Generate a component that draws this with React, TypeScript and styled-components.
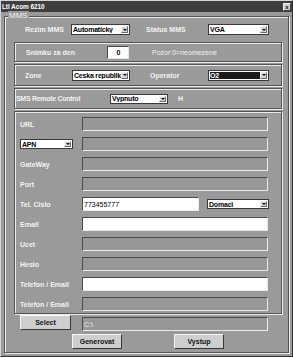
import React from 'react';
import styled, { createGlobalStyle } from 'styled-components';

const BG = '#9a9a9a';
const DARK = '#545454';
const LIGHT = '#ececec';
const LABEL = '#f3f3f3';

const Global = createGlobalStyle`
  html, body { margin: 0; padding: 0; background: ${BG}; }
  body { font-family: "Liberation Sans", Arial, sans-serif; }
  * { box-sizing: border-box; }
`;

const Window = styled.div`
  width: 293px;
  height: 357px;
  background: ${BG};
  border: 1px solid;
  border-color: #d6d6d6 #303030 #303030 #d6d6d6;
  display: flex;
  flex-direction: column;
`;

const TitleBar = styled.div`
  flex: none;
  height: 11px;
  background: #3e3e3e;
  display: flex;
  align-items: center;
  justify-content: space-between;
  padding: 0 1px 0 1px;
`;

const Title = styled.span`
  font-size: 6.5px;
  font-weight: bold;
  letter-spacing: -0.1px;
  color: #ffffff;
  white-space: nowrap;
`;

const CloseBtn = styled.span`
  width: 8px;
  height: 8px;
  background: #cfcfcf;
  border: 1px solid;
  border-color: #f0f0f0 #404040 #404040 #f0f0f0;
  display: flex;
  align-items: center;
  justify-content: center;
  font-size: 6px;
  font-weight: bold;
  line-height: 1;
  color: #111;
`;

const Body = styled.div`
  flex: 1;
  padding: 4px 3px 3px 3px;
  display: flex;
`;

const GroupBox = styled.div`
  position: relative;
  flex: 1;
  border: 1px solid ${DARK};
  box-shadow: inset 1px 1px 0 ${LIGHT}, 1px 1px 0 ${LIGHT};
  padding: 0 6px 0 9px;
  display: flex;
  flex-direction: column;
`;

const Legend = styled.span`
  position: absolute;
  top: -6px;
  left: 3px;
  padding: 0 1px;
  background: ${BG};
  font-size: 8px;
  line-height: 10px;
  color: ${LABEL};
`;

const Row = styled.div<{ $mt?: number; $h?: number }>`
  flex: none;
  display: flex;
  align-items: center;
  margin-top: ${p => p.$mt ?? 0}px;
  height: ${p => (p.$h ? `${p.$h}px` : 'auto')};
`;

const Box = styled.div<{ $mt: number; $h?: number }>`
  flex: none;
  margin-top: ${p => p.$mt}px;
  height: ${p => (p.$h ? `${p.$h}px` : 'auto')};
  border: 1px solid ${DARK};
  box-shadow: inset 1px 1px 0 ${LIGHT}, 1px 1px 0 ${LIGHT};
  display: flex;
  align-items: center;
`;

const FormBox = styled(Box)`
  flex-direction: column;
  align-items: stretch;
  gap: 6px;
  padding: 5px 0 2px 0;
`;

const FormRow = styled.div`
  height: 14px;
  display: flex;
  align-items: center;
`;

const Label = styled.span<{ $w?: number; $pl?: number; $ml?: number; $tight?: boolean; $thin?: boolean }>`
  flex: none;
  width: ${p => (p.$w ? `${p.$w}px` : 'auto')};
  padding-left: ${p => p.$pl ?? 0}px;
  margin-left: ${p => p.$ml ?? 0}px;
  font-size: 7px;
  font-weight: ${p => (p.$thin ? 'normal' : 'bold')};
  letter-spacing: ${p => (p.$tight ? '-0.3px' : '0')};
  color: ${LABEL};
  white-space: nowrap;
`;

const SelectBox = styled.div<{ $w: number; $h: number; $ml?: number; $mr?: number }>`
  flex: none;
  width: ${p => p.$w}px;
  height: ${p => p.$h}px;
  margin-left: ${p => p.$ml ?? 0}px;
  margin-right: ${p => p.$mr ?? 0}px;
  background: #ffffff;
  border: 1px solid #3a3a3a;
  display: flex;
  padding: 1px;
`;

const SelectText = styled.span<{ $dark?: boolean }>`
  flex: 1;
  min-width: 0;
  overflow: hidden;
  white-space: nowrap;
  padding-left: 0;
  background: ${p => (p.$dark ? '#1b1b1b' : '#ffffff')};
  color: ${p => (p.$dark ? '#ffffff' : '#000000')};
  font-size: 7px;
  font-weight: bold;
  letter-spacing: -0.2px;
  display: flex;
  align-items: center;
`;

const DropBtn = styled.span`
  flex: none;
  width: 7px;
  background: #d3d3d3;
  border: 1px solid;
  border-color: #f2f2f2 #6a6a6a #6a6a6a #f2f2f2;
  display: flex;
  align-items: center;
  justify-content: center;
  &::after {
    content: '';
    border-left: 2px solid transparent;
    border-right: 2px solid transparent;
    border-top: 2px solid #111;
  }
`;

const Field = styled.div<{ $w: number; $h?: number; $white?: boolean; $ml?: number; $mt?: number; $center?: boolean; $bold?: boolean }>`
  flex: none;
  width: ${p => p.$w}px;
  height: ${p => p.$h ?? 14}px;
  margin-left: ${p => p.$ml ?? 0}px;
  margin-top: ${p => p.$mt ?? 0}px;
  background: ${p => (p.$white ? '#ffffff' : '#979797')};
  border: 1px solid;
  border-color: #4a4a4a #e9e9e9 #e9e9e9 #4a4a4a;
  padding-left: 1px;
  display: flex;
  align-items: center;
  justify-content: ${p => (p.$center ? 'center' : 'flex-start')};
  font-size: 7px;
  font-weight: ${p => (p.$bold ? 'bold' : 'normal')};
  color: ${p => (p.$white ? '#000000' : '#f4f4f4')};
  white-space: nowrap;
`;

const Button = styled.button<{ $w: number }>`
  flex: none;
  width: ${p => p.$w}px;
  height: 15px;
  padding: 0;
  background: #cecece;
  border: 1px solid;
  border-color: #f6f6f6 #383838 #383838 #f6f6f6;
  font-family: "Liberation Sans", Arial, sans-serif;
  font-size: 7px;
  font-weight: bold;
  color: #111111;
`;

const ActionRow = styled.div`
  flex: none;
  display: flex;
  align-items: flex-start;
  margin-top: 1px;
  padding-left: 6px;
`;

const ButtonRow = styled.div`
  flex: none;
  display: flex;
  margin-top: 3px;
  padding-left: 58px;
  gap: 52px;
`;

const Select: React.FC<{ w: number; h: number; text: string; dark?: boolean; ml?: number; mr?: number }> = ({ w, h, text, dark, ml, mr }) => (
  <SelectBox $w={w} $h={h} $ml={ml} $mr={mr}>
    <SelectText $dark={dark}>{text}</SelectText>
    <DropBtn />
  </SelectBox>
);

const formRows: { label?: string; white?: boolean }[] = [
  { label: 'URL' },
  {},
  { label: 'GateWay' },
  { label: 'Port' },
  { label: 'Tel. Cislo' },
  { label: 'Email', white: true },
  { label: 'Ucet' },
  { label: 'Heslo' },
  { label: 'Telefon / Email', white: true },
  { label: 'Telefon / Email' },
];

export default function App() {
  return (
    <>
      <Global />
      <Window>
        <TitleBar>
          <Title>Ltl Acom 6210</Title>
          <CloseBtn>x</CloseBtn>
        </TitleBar>
        <Body>
          <GroupBox>
            <Legend>MMS</Legend>
            <Row $mt={7} $h={11}>
              <Label $w={57} $pl={11}>Rezim MMS</Label>
              <Select w={59} h={11} text="Automaticky" />
              <Label $w={78} $pl={16}>Status MMS</Label>
              <Select w={61} h={11} text="VGA" />
            </Row>
            <Box $mt={7} $h={20}>
              <Label $w={92} $pl={11}>Snimku za den</Label>
              <Field $w={22} $h={13} $white $center $bold>0</Field>
              <Label $ml={23} $thin>Pozor:0=neomezene</Label>
            </Box>
            <Box $mt={2} $h={22}>
              <Label $w={57} $pl={10}>Zone</Label>
              <Select w={58} h={11} text="Ceska republik" />
              <Label $w={78} $pl={20}>Operator</Label>
              <Select w={61} h={11} text="O2" dark />
            </Box>
            <Box $mt={2} $h={21}>
              <Label $w={95} $pl={1} $tight>SMS Remote Control</Label>
              <Select w={58} h={10} text="Vypnuto" />
              <Label $ml={10}>H</Label>
            </Box>
            <FormBox $mt={2}>
              {formRows.map((r, i) => {
                if (i === 1) {
                  return (
                    <FormRow key={i}>
                      <Select w={53} h={10} text="APN" ml={5} mr={9} />
                      <Field $w={186} />
                    </FormRow>
                  );
                }
                if (r.label === 'Tel. Cislo') {
                  return (
                    <FormRow key={i}>
                      <Label $w={67} $pl={5}>{r.label}</Label>
                      <Field $w={117} $white>773455777</Field>
                      <Select w={62} h={10} text="Domaci" ml={8} />
                    </FormRow>
                  );
                }
                return (
                  <FormRow key={i}>
                    <Label $w={67} $pl={5}>{r.label}</Label>
                    <Field $w={186} $white={r.white} />
                  </FormRow>
                );
              })}
            </FormBox>
            <ActionRow>
              <Button $w={51}>Select</Button>
              <Field $w={186} $ml={11} $mt={2}>C:\</Field>
            </ActionRow>
            <ButtonRow>
              <Button $w={50}>Generovat</Button>
              <Button $w={50}>Vystup</Button>
            </ButtonRow>
          </GroupBox>
        </Body>
      </Window>
    </>
  );
}
